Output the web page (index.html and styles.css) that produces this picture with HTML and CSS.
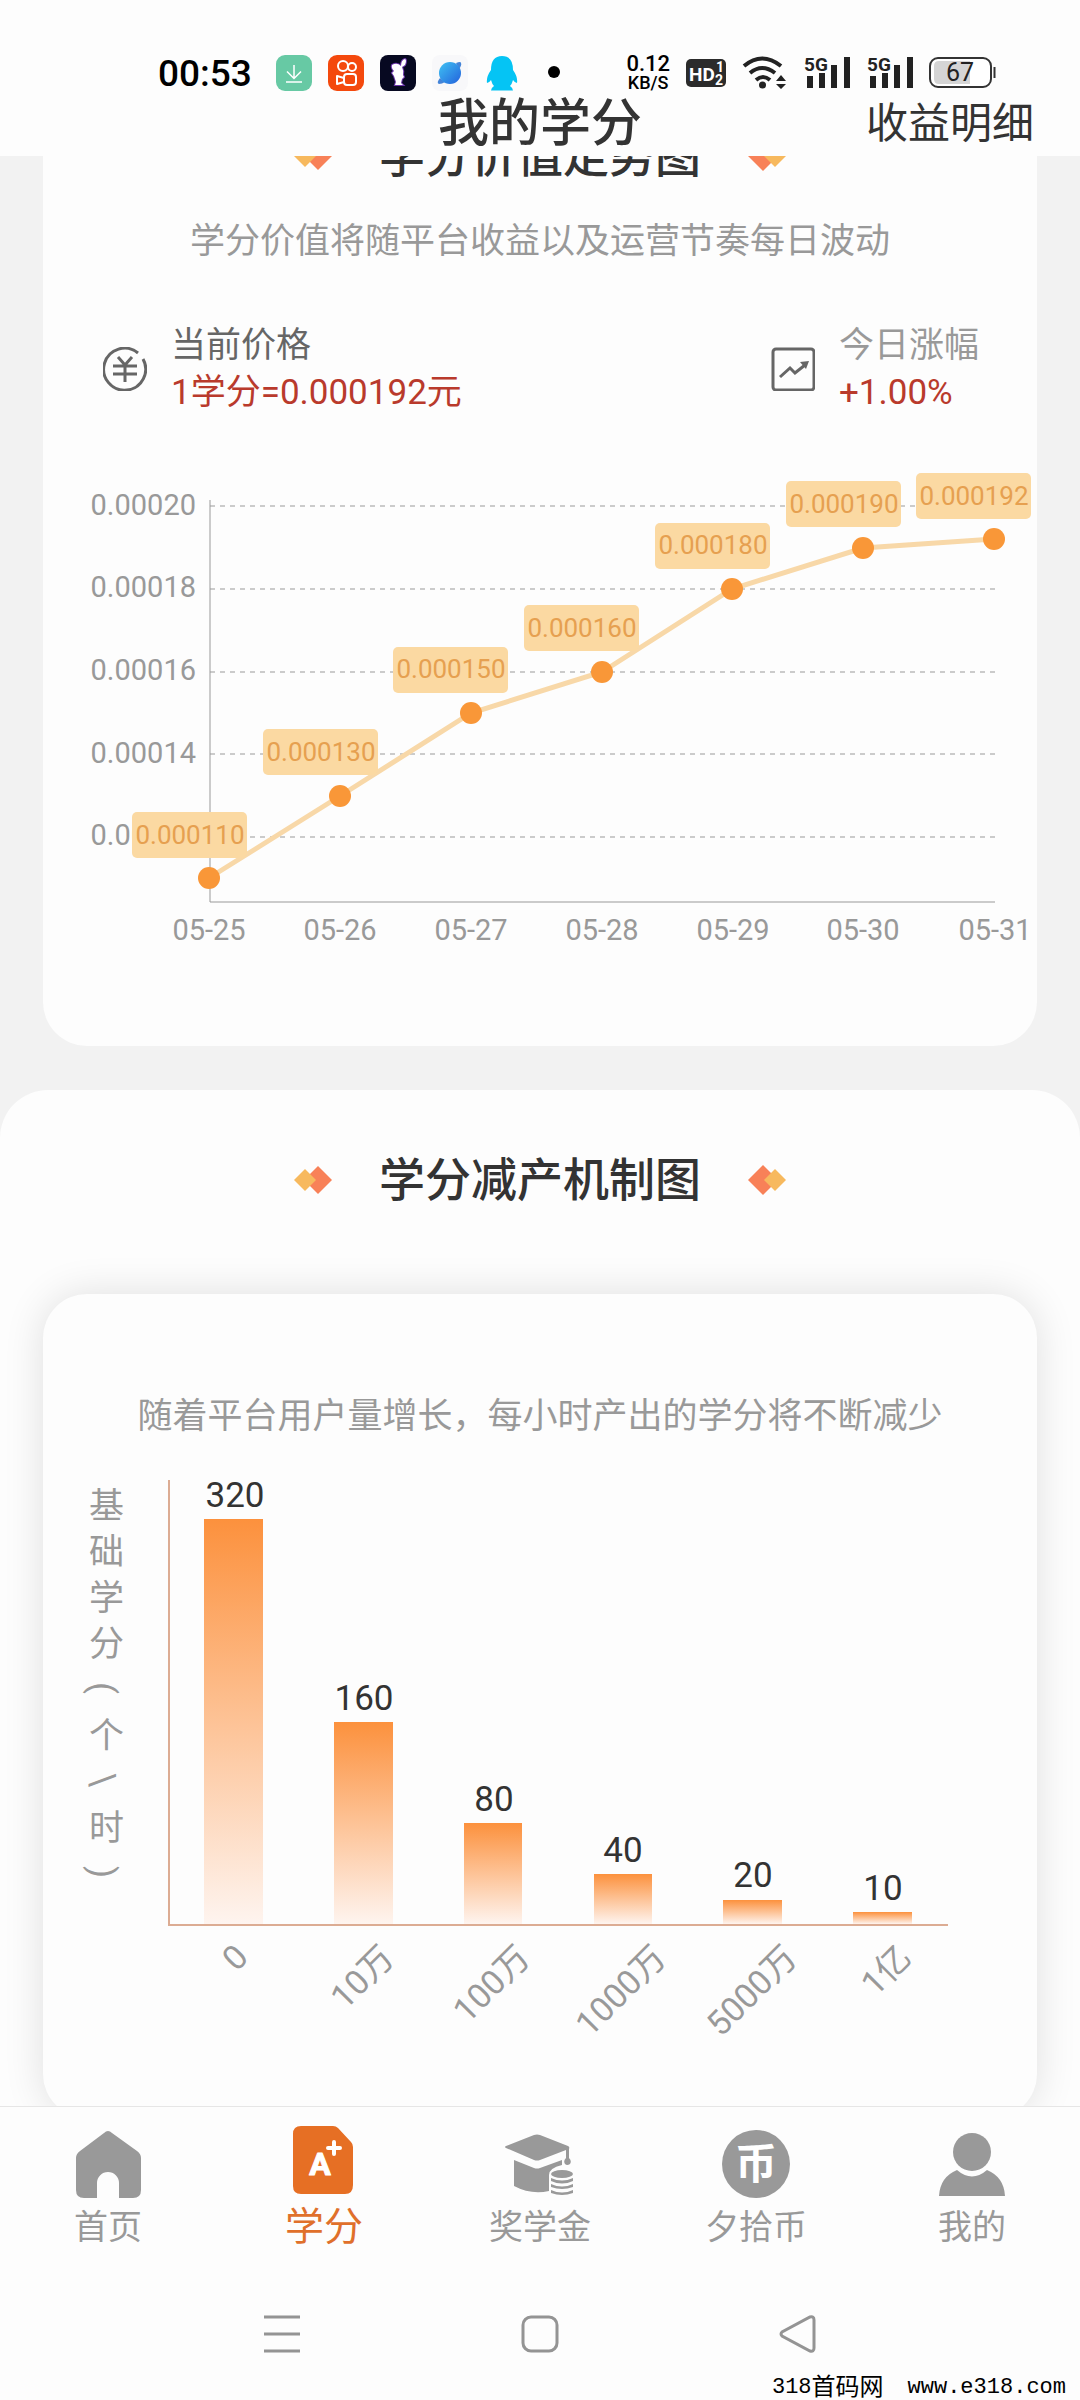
FILE: index.html
```html
<!DOCTYPE html>
<html lang="zh-CN">
  <head>
    <meta charset="UTF-8" />
    <meta name="viewport" content="width=device-width, initial-scale=1.0" />
    <title>我的学分</title>
    <link rel="stylesheet" href="styles.css">
  </head>
  <body>
    <header class="header">
      <div class="status">
        <span class="status-time">00:53</span>
        <div class="status-apps">
          <svg width="36" height="36" viewBox="0 0 36 36">
            <rect width="36" height="36" rx="9" fill="#67c9a4" />
            <path d="M18 10v13M11 16.500l7 7 7-7M10 27h16" fill="none" stroke="#fff" stroke-width="1.500" />
          </svg>
          <svg width="36" height="36" viewBox="0 0 36 36">
            <rect width="36" height="36" rx="9" fill="#f4490d" />
            <g fill="none" stroke="#fff" stroke-width="2">
              <circle cx="15" cy="11" r="5" />
              <circle cx="24" cy="12" r="4" />
              <rect x="16" y="19" width="12" height="11" rx="3" />
              <path d="M16 23l-7-2v8l7-2" stroke-linejoin="round" />
            </g>
          </svg>
          <svg width="36" height="36" viewBox="0 0 36 36">
            <rect width="36" height="36" rx="8" fill="#070921" />
            <path d="M12 10q5-3 9 1 0-6 4-7 2 1 0 6l-3 2q2 4 1 8l1 2-2 2-1 4 2 2h-8l1-3-2-6-2-3 2-2q-3-3-2-6z" fill="#fff" stroke="#6a35a8" stroke-width="2" paint-order="stroke" />
          </svg>
          <svg width="36" height="36" viewBox="0 0 36 36">
            <defs>
              <linearGradient id="planet" x1="0" y1="0" x2="1" y2="1">
                <stop offset="0" stop-color="#3fc2f3" />
                <stop offset="1" stop-color="#2361dc" />
              </linearGradient>
            </defs>
            <rect width="36" height="36" rx="8" fill="#f8f8fa" />
            <path d="M8 23q-4 5-1 6 3 0 6-2zM24 8q5-2 5 0 1 2-2 6z" fill="#4484d8" />
            <circle cx="18" cy="18" r="11" fill="url(#planet)" />
          </svg>
          <svg width="36" height="36" viewBox="0 0 36 36">
            <path d="M18 1q11 0 11 14 5 7 4 13-2 0-4-3-1 4-3 6 3 2 3 4.500H7Q7 33 10 31q-2-2-3-6-2 3-4 3-1-6 4-13Q7 1 18 1z" fill="#05c4f4" />
          </svg>
          <svg width="36" height="36" viewBox="0 0 36 36">
            <circle cx="18" cy="17" r="6" fill="#000" />
          </svg>
        </div>
        <div class="status-right">
          <div class="speed">
            <span class="speed-value">0.12</span>
            <span class="speed-unit">KB/S</span>
          </div>
          <svg width="40" height="36" viewBox="0 0 40 36">
            <rect y="4" width="40" height="28" rx="5" fill="#2b2b2b" />
            <g fill="#fff" font-weight="700">
              <text x="3" y="26" font-size="19">HD</text>
              <text x="30" y="17" font-size="14">1</text>
              <text x="29" y="30" font-size="14">2</text>
            </g>
          </svg>
          <svg width="45" height="36" viewBox="0 0 45 36">
            <g fill="none" stroke="#222" stroke-width="4">
              <path d="M2 11q18-15 37 0" />
              <path d="M8 18q12-10 25 0" />
              <path d="M14 25q7-6 14 0" />
            </g>
            <circle cx="20.500" cy="30" r="3.500" fill="#222" />
            <path d="M34 26l5-6 5 6zM34 29l5 5 5-5z" fill="#222" />
          </svg>
          <svg class="signal" width="47" height="36" viewBox="0 0 47 36">
            <text x="1" y="16" font-size="19" font-weight="700">5G</text>
            <path d="M4 21h6v12H4zM16 18h6v15h-6zM28 10h6v23h-6zM41 2h6v31h-6z" />
          </svg>
          <svg class="signal" width="47" height="36" viewBox="0 0 47 36">
            <text x="1" y="16" font-size="19" font-weight="700">5G</text>
            <path d="M4 21h6v12H4zM16 18h6v15h-6zM28 10h6v23h-6zM41 2h6v31h-6z" />
          </svg>
          <svg width="67" height="36" viewBox="0 0 67 36">
            <rect x="1" y="3" width="61" height="29" rx="8" fill="#fff" stroke="#333" stroke-width="2" />
            <path d="M10 6h31v23H10q-5 0-5-5V11q0-5 5-5z" fill="#d5d5d5" />
            <path d="M65.500 12v11" stroke="#333" stroke-width="2" />
            <text x="31" y="26" font-size="25" text-anchor="middle" fill="#222">67</text>
          </svg>
        </div>
      </div>
      <div class="titlebar">
        <h1>我的学分</h1>
        <a class="detail-link" href="#detail">收益明细</a>
      </div>
    </header>

    <main class="main">
      <div class="content">
        <section class="card trend">
          <div class="heading">
            <svg width="38" height="30" viewBox="0 0 38 30">
              <path d="M24 1l14 14-14 14-14-14z" fill="#f88158" />
              <path d="M11 4l11 11-11 11L0 15z" fill="#f7b95e" />
            </svg>
            <h2>学分价值走势图</h2>
            <svg width="38" height="30" viewBox="0 0 38 30">
              <path d="M15 0l15 15-15 15L0 15z" fill="#f88158" />
              <path d="M27 4l11 11-11 11-11-11z" fill="#f7b95e" />
            </svg>
          </div>
          <p class="subtitle">学分价值将随平台收益以及运营节奏每日波动</p>

          <div class="stats">
            <div class="stat">
              <svg width="44" height="44" viewBox="0 0 44 44" fill="none" stroke="#666" stroke-width="3">
                <path d="M35 6A21 21 0 1 0 40 12" />
                <path d="M15 10l7 8 7-8M10 19h24M10 27h24M22 18v17" />
              </svg>
              <div>
                <div class="stat-label dark">当前价格</div>
                <div class="stat-value">1学分=0.000192元</div>
              </div>
            </div>
            <div class="stat">
              <svg width="44" height="44" viewBox="0 0 44 44" fill="none" stroke="#666" stroke-width="3">
                <rect x="2" y="2" width="41" height="41" rx="3" />
                <path d="M9 30l10-9 5 5 10-8" />
                <path d="M29 15l9-1-3 8z" fill="#666" stroke="none" />
              </svg>
              <div>
                <div class="stat-label">今日涨幅</div>
                <div class="stat-value">+1.00%</div>
              </div>
            </div>
          </div>

          <svg class="trend-chart" viewBox="0 0 994 500">
            <path class="grid" d="M167 46h785M167 129h785M167 212h785M167 294h785M167 377h785" />
            <path class="axis" d="M167 40v402h785" />
            <g class="ylabels">
              <text x="153" y="55">0.00020</text>
              <text x="153" y="137">0.00018</text>
              <text x="153" y="220">0.00016</text>
              <text x="153" y="303">0.00014</text>
              <text x="153" y="385">0.00012</text>
            </g>
            <g class="xlabels">
              <text x="166" y="480">05-25</text>
              <text x="297" y="480">05-26</text>
              <text x="428" y="480">05-27</text>
              <text x="559" y="480">05-28</text>
              <text x="690" y="480">05-29</text>
              <text x="820" y="480">05-30</text>
              <text x="952" y="480">05-31</text>
            </g>
            <polyline class="line" points="166,418 297,336 428,253 559,212 689,129 820,88 951,79" />
            <g class="dots">
              <circle cx="166" cy="418" r="11" />
              <circle cx="297" cy="336" r="11" />
              <circle cx="428" cy="253" r="11" />
              <circle cx="559" cy="212" r="11" />
              <circle cx="689" cy="129" r="11" />
              <circle cx="820" cy="88" r="11" />
              <circle cx="951" cy="79" r="11" />
            </g>
            <g class="tags">
              <rect x="89" y="352" width="115" height="46" rx="5" />
              <rect x="220" y="269" width="115" height="46" rx="5" />
              <rect x="350" y="187" width="115" height="46" rx="5" />
              <rect x="481" y="145" width="115" height="46" rx="5" />
              <rect x="612" y="63" width="115" height="46" rx="5" />
              <rect x="743" y="21" width="115" height="46" rx="5" />
              <rect x="873" y="13" width="115" height="46" rx="5" />
            </g>
            <g class="tag-texts">
              <text x="147" y="384">0.000110</text>
              <text x="278" y="301">0.000130</text>
              <text x="408" y="218">0.000150</text>
              <text x="539" y="177">0.000160</text>
              <text x="670" y="94">0.000180</text>
              <text x="801" y="53">0.000190</text>
              <text x="931" y="45">0.000192</text>
            </g>
          </svg>
        </section>

        <section class="panel">
          <div class="heading">
            <svg width="38" height="30" viewBox="0 0 38 30">
              <path d="M24 1l14 14-14 14-14-14z" fill="#f88158" />
              <path d="M11 4l11 11-11 11L0 15z" fill="#f7b95e" />
            </svg>
            <h2>学分减产机制图</h2>
            <svg width="38" height="30" viewBox="0 0 38 30">
              <path d="M15 0l15 15-15 15L0 15z" fill="#f88158" />
              <path d="M27 4l11 11-11 11-11-11z" fill="#f7b95e" />
            </svg>
          </div>
          <div class="card output">
            <p class="subtitle">随着平台用户量增长，每小时产出的学分将不断减少</p>
            <div class="output-body">
              <div class="output-axis">
                <span>基</span><span>础</span><span>学</span><span>分</span><span>(</span><span>个</span><span>\</span><span>时</span><span>)</span>
              </div>
              <svg class="output-chart" viewBox="0 0 917 600">
                <defs>
                  <linearGradient id="bar" x1="0" y1="0" x2="0" y2="1">
                    <stop offset="0" stop-color="#fc913d" />
                    <stop offset="1" stop-color="#fef4ef" />
                  </linearGradient>
                </defs>
                <g fill="url(#bar)">
                  <rect x="84" y="49" width="59" height="405" />
                  <rect x="214" y="252" width="59" height="202" />
                  <rect x="344" y="353" width="58" height="101" />
                  <rect x="474" y="404" width="58" height="50" />
                  <rect x="603" y="430" width="59" height="24" />
                  <rect x="733" y="442" width="59" height="12" />
                </g>
                <path class="output-line" d="M49 10v445h779" />
                <g class="values">
                  <text x="115" y="37">320</text>
                  <text x="244" y="240">160</text>
                  <text x="374" y="341">80</text>
                  <text x="503" y="392">40</text>
                  <text x="633" y="417">20</text>
                  <text x="763" y="430">10</text>
                </g>
                <g class="users">
                  <text transform="translate(130 489) rotate(-45)">0</text>
                  <text transform="translate(276 490) rotate(-45)">10万</text>
                  <text transform="translate(412 490) rotate(-45)">100万</text>
                  <text transform="translate(548 490) rotate(-45)">1000万</text>
                  <text transform="translate(679 490) rotate(-45)">5000万</text>
                  <text transform="translate(793 490) rotate(-45)">1亿</text>
                </g>
              </svg>
            </div>
          </div>
        </section>
      </div>
    </main>

    <nav class="tabbar">
      <a class="tab" href="#home">
        <svg width="72" height="70" viewBox="0 0 72 70" fill="#999">
          <path d="M32 4q4-4 8 0l25 18q4 3 4 7v32q0 8-8 8H47V54a11 11 0 0 0-22 0v15H12q-8 0-8-8V29q0-4 4-7z" />
        </svg>
        首页
      </a>
      <a class="tab active" href="#credit">
        <svg width="72" height="70" viewBox="0 0 72 70">
          <path d="M13-3h32q3 0 5 2l13 14q2 2 2 5v38q0 9-8 9H13q-8 0-8-8V5q0-8 8-8z" fill="#e66f24" />
          <text x="32" y="46" font-size="32" font-weight="700" text-anchor="middle" fill="#fff" stroke="#fff" stroke-linejoin="round">A</text>
          <path d="M46 13v12M40 19h12" stroke="#fff" stroke-width="4" stroke-linecap="round" />
        </svg>
        学分
      </a>
      <a class="tab" href="#scholarship">
        <svg width="72" height="70" viewBox="0 0 72 70" fill="#999">
          <path d="M30 6q3-1 6 0l28 11q2 1 1 3v9q3 3 1 6-3 2-5 0-2-3 1-6v-8L36 31q-3 1-6 0L2 19q-2-1 0-2z" />
          <path d="M10 31l20 8q3 1 6 0l22-8v5q-13 3-13 10v16q-18 4-35-5z" />
          <ellipse cx="58" cy="45" rx="11" ry="4" />
          <path d="M47 49q11 5 22 0v3q-11 5-22 0zM47 55q11 5 22 0v3q-11 4-22 0zM47 61q11 5 22 0v3q-11 4-22 0z" />
        </svg>
        奖学金
      </a>
      <a class="tab" href="#coin">
        <svg width="72" height="70" viewBox="0 0 72 70">
          <circle cx="36" cy="35" r="34" fill="#999" />
          <text x="36" y="50" font-size="42" font-weight="700" text-anchor="middle" fill="#fff">币</text>
        </svg>
        夕拾币
      </a>
      <a class="tab" href="#mine">
        <svg width="72" height="70" viewBox="0 0 72 70" fill="#999">
          <circle cx="36" cy="23" r="19" />
          <path d="M21 41q15 13 30 0 17 7 18 26H3q1-19 18-26z" />
        </svg>
        我的
      </a>
    </nav>

    <div class="sysnav">
      <button type="button" aria-label="菜单">
        <svg width="38" height="38" viewBox="0 0 38 38"><path d="M1 2h36M1 19h36M1 36h36" /></svg>
      </button>
      <button type="button" aria-label="主屏幕">
        <svg width="38" height="38" viewBox="0 0 38 38"><rect x="2" y="2" width="34" height="34" rx="8" /></svg>
      </button>
      <button type="button" aria-label="返回">
        <svg width="38" height="38" viewBox="0 0 38 38"><path d="M3 17q-2 2 0 4l28 15q4 1 4-3V5q0-4-4-3z" /></svg>
      </button>
    </div>
    <footer class="site"><span>318</span>首码网<span class="url">www.e318.com</span></footer>
  </body>
</html>
```
FILE: styles.css
```css
* {
  box-sizing: border-box;
}
body {
  margin: 0;
  height: 100vh;
  display: flex;
  flex-flow: column;
  background-color: #fdfdfd;
  color: #333;
  font-family: Roboto, "Noto Sans CJK SC", sans-serif;
  font-size: 35px;
}
h1, h2, p {
  margin: 0;
}
a {
  color: inherit;
  text-decoration: none;
}
svg {
  display: block;
  flex-shrink: 0;
}

.header {
  flex-shrink: 0;
  height: 156px;
  padding-top: 54px;
}
.status {
  display: flex;
  align-items: center;
  height: 38px;
  padding: 0 84px 0 158px;
  color: #000;
}
.status-time {
  font-size: 37px;
  font-weight: 500;
}
.status-apps {
  display: flex;
  gap: 16px;
  margin-left: 24px;
}
.status-right {
  display: flex;
  align-items: center;
  gap: 16px;
  margin-left: auto;
}
.speed {
  display: flex;
  flex-flow: column;
  align-items: center;
  font-weight: 500;
}
.speed-value {
  font-size: 22px;
  line-height: 20px;
}
.speed-unit {
  font-size: 18px;
  line-height: 18px;
}
.signal {
  fill: #222;
}
.titlebar {
  display: grid;
  grid-template-columns: 1fr auto 1fr;
  align-items: center;
  height: 64px;
  padding: 0 46px;
}
.titlebar h1 {
  grid-column: 2;
  font-size: 51px;
  font-weight: 500;
  line-height: 64px;
}
.detail-link {
  justify-self: end;
  font-size: 42px;
  line-height: 64px;
}

.main {
  flex: 1;
  min-height: 0;
  overflow: hidden;
  background-color: #f2f2f2;
}
/* the list is scrolled a little way under the header */
.content {
  margin-top: -90px;
}
.card {
  margin: 0 43px;
  border-radius: 44px;
  background-color: #fdfdfd;
}
.heading {
  display: flex;
  justify-content: center;
  align-items: center;
  gap: 47px;
}
.heading h2 {
  font-size: 46px;
  font-weight: 500;
  line-height: 60px;
}
.subtitle {
  line-height: 48px;
  text-align: center;
  color: #999;
}

.trend {
  padding: 60px 0 86px;
}
.trend .subtitle {
  margin-top: 32px;
}
.stats {
  display: flex;
  justify-content: space-between;
  margin: 56px 0 44px;
  padding: 0 58px 0 60px;
}
.stat {
  display: flex;
  align-items: center;
  gap: 24px;
  line-height: 47px;
}
.stat-label {
  color: #999;
}
.stat-label.dark {
  color: #666;
}
.stat-value {
  color: #b93a2c;
}

.trend-chart {
  width: 100%;
  font-size: 29px;
  fill: #999;
}
.grid {
  stroke: #999;
  stroke-width: 1;
  stroke-dasharray: 5 5;
}
.axis {
  fill: none;
  stroke: #999;
  stroke-width: 1;
}
.ylabels {
  text-anchor: end;
}
.xlabels {
  text-anchor: middle;
}
.line {
  fill: none;
  stroke: #f8d8a8;
  stroke-width: 5;
}
.dots {
  fill: #f99738;
}
.tags {
  fill: #fbd9a2;
}
.tag-texts {
  font-size: 26px;
  text-anchor: middle;
  fill: #e6a050;
}

.panel {
  margin-top: 44px;
  padding: 60px 0 84px;
  border-radius: 48px 48px 0 0;
  background-color: #fdfdfd;
}
.output {
  margin-top: 84px;
  padding: 99px 0 48px;
  box-shadow: 0 0 40px rgba(0, 0, 0, 0.12);
}
.output-body {
  display: flex;
  margin-top: 29px;
  padding-left: 40px;
}
.output-axis {
  writing-mode: vertical-rl;
  display: flex;
  width: 37px;
  padding-top: 11px;
  line-height: 35px;
  color: #999;
}
.output-axis span {
  height: 46px;
  text-align: center;
}
.output-chart {
  flex: 1;
  min-width: 0;
}
.output-line {
  fill: none;
  stroke: #dcac93;
  stroke-width: 2;
}
.values {
  font-size: 35px;
  text-anchor: middle;
  fill: #333;
}
.users {
  font-size: 34px;
  text-anchor: end;
  fill: #999;
}

.tabbar {
  flex-shrink: 0;
  display: flex;
  padding: 22px 0 38px;
  border-top: 1px solid #e6e6e6;
}
.tab {
  flex: 1;
  display: flex;
  flex-flow: column;
  align-items: center;
  font-size: 34px;
  line-height: 56px;
  color: #999;
}
.tab svg {
  overflow: visible;
}
.tab.active {
  font-size: 39px;
  color: #e0702b;
}

.sysnav {
  flex-shrink: 0;
  display: flex;
  justify-content: center;
  gap: 220px;
  height: 82px;
}
.sysnav button {
  padding: 0;
  border: 0;
  background: none;
}
.sysnav svg {
  fill: none;
  stroke: #949494;
  stroke-width: 3;
}

.site {
  flex-shrink: 0;
  display: flex;
  justify-content: flex-end;
  align-items: center;
  height: 25px;
  padding-right: 14px;
  font-size: 24px;
  line-height: 25px;
  color: #000;
}
.site span {
  font-family: "Liberation Mono", monospace;
  font-size: 22px;
}
.site .url {
  margin-left: 24px;
}
```
